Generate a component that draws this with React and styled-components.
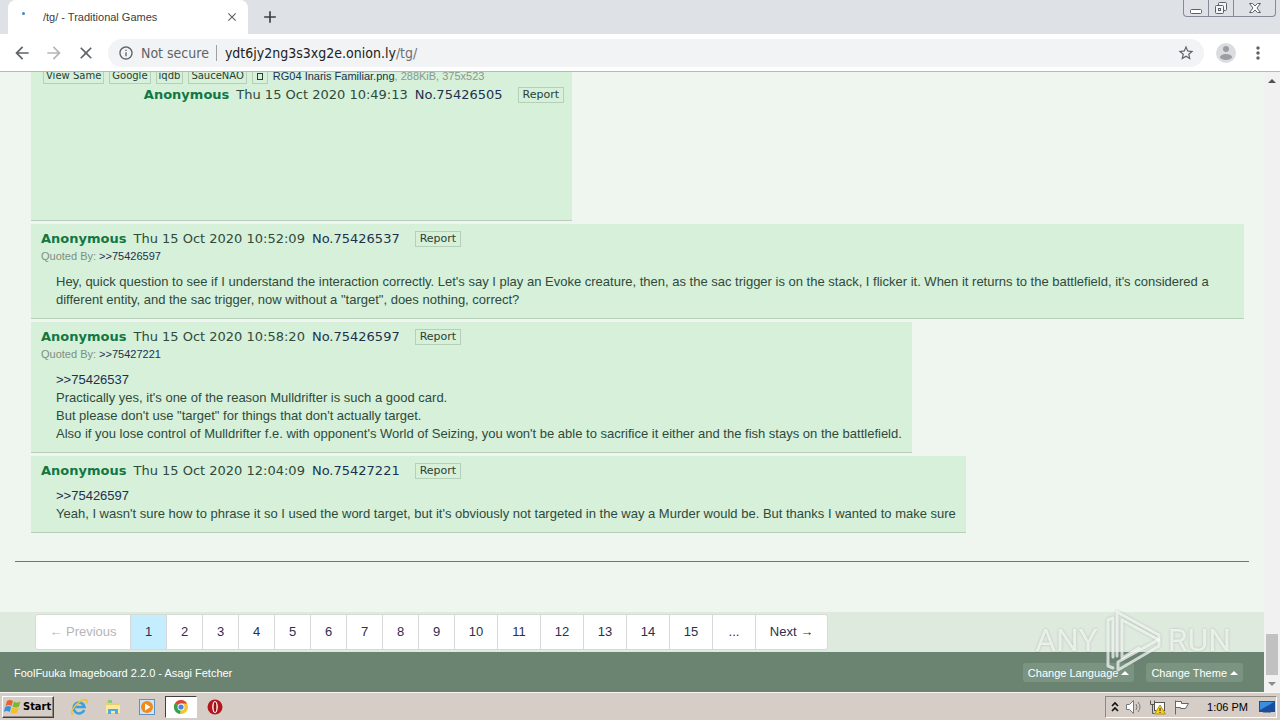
import React from 'react';
import styled, { createGlobalStyle, css } from 'styled-components';
import { MdArrowBack, MdArrowForward, MdClose, MdStarBorder, MdMoreVert, MdAdd, MdInfoOutline } from 'react-icons/md';

const GlobalStyle = createGlobalStyle`
  * {
    box-sizing: border-box;
  }
  body {
    margin: 0;
    font-family: 'Liberation Sans', Arial, sans-serif;
    font-size: 13px;
    line-height: 18px;
    color: #2f4a3a;
  }
  button {
    font: inherit;
    color: inherit;
    padding: 0;
    border: 0;
    background: none;
  }
  a {
    color: #22304f;
    text-decoration: none;
  }
  svg {
    display: block;
    flex: none;
  }
`;

const posts = [
  {
    id: '75426537',
    time: '10:52:09',
    quotedBy: '75426597',
    lines: [
      'Hey, quick question to see if I understand the interaction correctly. Let\'s say I play an Evoke creature, then, as the sac trigger is on the stack, I flicker it. When it returns to the battlefield, it\'s considered a different entity, and the sac trigger, now without a "target", does nothing, correct?',
    ],
  },
  {
    id: '75426597',
    time: '10:58:20',
    quotedBy: '75427221',
    replyTo: '75426537',
    lines: [
      "Practically yes, it's one of the reason Mulldrifter is such a good card.",
      'But please don\'t use "target" for things that don\'t actually target.',
      "Also if you lose control of Mulldrifter f.e. with opponent's World of Seizing, you won't be able to sacrifice it either and the fish stays on the battlefield.",
    ],
  },
  {
    id: '75427221',
    time: '12:04:09',
    replyTo: '75426597',
    lines: [
      "Yeah, I wasn't sure how to phrase it so I used the word target, but it's obviously not targeted in the way a Murder would be. But thanks I wanted to make sure",
    ],
  },
];

const pages = ['1', '2', '3', '4', '5', '6', '7', '8', '9', '10', '11', '12', '13', '14', '15', '...'];

const App = () => {
  return (
    <Screen>
      <GlobalStyle />
      <TabStrip />
      <Toolbar />
      <Viewport>
        <Board />
        <Scrollbar />
      </Viewport>
      <Taskbar />
      <Watermark />
    </Screen>
  );
};

const TabStrip = () => {
  return (
    <Strip>
      <Tab>
        <Spinner />
        <span>/tg/ - Traditional Games</span>
        <IconButton aria-label="Close tab" $size="16px">
          <MdClose size={14} />
        </IconButton>
      </Tab>
      <IconButton aria-label="New tab" $size="28px" $color="#3c4043">
        <MdAdd size={20} />
      </IconButton>
      <WindowControls>
        <WindowButton aria-label="Minimize" $width="24px">
          <svg width="14" height="14" viewBox="0 0 14 14" fill="#fff" stroke="#5b606c">
            <rect x="1.500" y="8.500" width="11" height="4" rx="1" />
          </svg>
        </WindowButton>
        <WindowButton aria-label="Restore" $width="25px">
          <svg width="14" height="14" viewBox="0 0 14 14" fill="#f4f5f7" stroke="#5b606c">
            <rect x="4.500" y="1.500" width="8" height="8" rx="1" />
            <rect x="1.500" y="4.500" width="8" height="8" rx="1" />
            <rect x="4.500" y="7.500" width="2" height="2" />
          </svg>
        </WindowButton>
        <WindowButton aria-label="Close" $width="42px">
          <svg width="14" height="14" viewBox="0 0 14 14" fill="#fff" stroke="#5b606c">
            <path d="M1.500 2.500h3L7 5l2.500-2.500h3L9 7l3.500 4.500h-3L7 9l-2.500 2.500h-3L5 7z" />
          </svg>
        </WindowButton>
      </WindowControls>
    </Strip>
  );
};

const Toolbar = () => {
  return (
    <Bar>
      <IconButton aria-label="Back" $size="32px">
        <MdArrowBack size={20} />
      </IconButton>
      <IconButton aria-label="Forward" $size="32px" $color="#b4b6b9">
        <MdArrowForward size={20} />
      </IconButton>
      <IconButton aria-label="Stop" $size="32px">
        <MdClose size={20} />
      </IconButton>
      <Omnibox>
        <MdInfoOutline size={16} />
        <Secure>Not secure</Secure>
        <Address>
          ydt6jy2ng3s3xg2e.onion.ly<span>/tg/</span>
        </Address>
        <IconButton aria-label="Bookmark" $size="20px">
          <MdStarBorder size={18} />
        </IconButton>
      </Omnibox>
      <IconButton aria-label="Profile" $size="32px">
        <svg width="20" height="20" viewBox="0 0 20 20">
          <circle cx="10" cy="10" r="10" fill="#dadce0" />
          <circle cx="10" cy="6" r="3" fill="#9a9da1" />
          <ellipse cx="10" cy="14" rx="6" ry="3" fill="#9a9da1" />
        </svg>
      </IconButton>
      <IconButton aria-label="Menu" $size="32px">
        <MdMoreVert size={20} />
      </IconButton>
    </Bar>
  );
};

const PostHead = ({ id, time }) => {
  return (
    <Head>
      <strong>Anonymous</strong>
      <time>Thu 15 Oct 2020 {time}</time>
      <a href={`#${id}`}>No.{id}</a>
      <Report>Report</Report>
    </Head>
  );
};

const Board = () => {
  return (
    <Page>
      <Thread>
        <ImagePost>
          <FileRow>
            <Tag>View Same</Tag>
            <Tag>Google</Tag>
            <Tag>iqdb</Tag>
            <Tag>SauceNAO</Tag>
            <Tag aria-label="Download">
              <svg width="10" height="12" viewBox="0 0 10 12" fill="none" stroke="currentColor">
                <rect x="2.500" y="3.500" width="5" height="6" />
              </svg>
            </Tag>
            <span>
              <a href="#file">RG04 Inaris Familiar.png</a>, 288KiB, 375x523
            </span>
          </FileRow>
          <PostHead id="75426505" time="10:49:13" />
        </ImagePost>
        {posts.map((post) => {
          return (
            <Post key={post.id}>
              <PostHead id={post.id} time={post.time} />
              {post.quotedBy && (
                <Quoted>
                  Quoted By: <a href={`#${post.quotedBy}`}>&gt;&gt;{post.quotedBy}</a>
                </Quoted>
              )}
              <Message>
                {post.replyTo && (
                  <p>
                    <a href={`#${post.replyTo}`}>&gt;&gt;{post.replyTo}</a>
                  </p>
                )}
                {post.lines.map((line) => (
                  <p key={line}>{line}</p>
                ))}
              </Message>
            </Post>
          );
        })}
      </Thread>
      <Rule />
      <Paginate aria-label="Pages">
        <ul>
          <PageItem $width="94px" $muted>
            <a href="#prev">← Previous</a>
          </PageItem>
          {pages.map((page) => (
            <PageItem key={page} $width={page.length > 1 ? '43px' : '36px'} $active={page === '1'}>
              <a href="#page">{page}</a>
            </PageItem>
          ))}
          <PageItem $width="72px">
            <a href="#next">Next →</a>
          </PageItem>
        </ul>
      </Paginate>
      <Footer>
        <span>FoolFuuka Imageboard 2.2.0 - Asagi Fetcher</span>
        <FooterButton>
          Change Language <Caret />
        </FooterButton>
        <FooterButton>
          Change Theme <Caret />
        </FooterButton>
      </Footer>
    </Page>
  );
};

const Scrollbar = () => {
  return (
    <Track>
      <Arrow aria-label="Scroll up">
        <svg width="8" height="4" viewBox="0 0 8 4" fill="#505050">
          <path d="M0 4L4 0l4 4z" />
        </svg>
      </Arrow>
      <Thumb />
      <Arrow aria-label="Scroll down">
        <svg width="8" height="4" viewBox="0 0 8 4" fill="#8a8a8a">
          <path d="M0 0l4 4 4-4z" />
        </svg>
      </Arrow>
    </Track>
  );
};

const Taskbar = () => {
  return (
    <Task>
      <StartButton>
        <svg width="18" height="16" viewBox="0 0 18 16">
          <path d="M3 2q3-2 6 0L7.500 7q-3-2-6 0z" fill="#e8622c" />
          <path d="M10 2.500q3 2 6.500 0L15 7.500q-3 2-6.500 0z" fill="#7db832" />
          <path d="M1.200 8q3-2 6 0l-1.500 5q-3-2-6 0z" fill="#3d8fd8" />
          <path d="M8.200 8.500q3 2 6.500 0l-1.500 5q-3 2-6.500 0z" fill="#f5bd27" />
        </svg>
        Start
      </StartButton>
      <TaskButton aria-label="Internet Explorer">
        <svg width="18" height="18" viewBox="0 0 18 18" fill="none">
          <path d="M14.200 12A5.500 5.500 0 1 1 14.500 9H5" stroke="#3aa0de" strokeWidth="2.600" />
          <path d="M3 16.500C-1 15 5 6.500 10 3.500S18.500 1 16.500 5.500" stroke="#ecc233" strokeWidth="1.500" />
        </svg>
      </TaskButton>
      <TaskButton aria-label="Explorer">
        <svg width="18" height="18" viewBox="0 0 18 18">
          <path d="M2 3h5l1 2h7v10H2z" fill="#e9cf6f" />
          <path d="M4 2h4v3H4z" fill="#8fc97a" />
          <path d="M2 7h14v8H2z" fill="#f8e9a1" />
          <path d="M4 16v-5h10v5h-3v-3H7v3z" fill="#54a9dd" />
        </svg>
      </TaskButton>
      <TaskButton aria-label="Media Player">
        <svg width="18" height="18" viewBox="0 0 18 18">
          <rect x="1.500" y="1.500" width="15" height="15" fill="#cfe4f5" stroke="#5e93c4" />
          <circle cx="9" cy="9" r="6" fill="#f08a1d" />
          <path d="M7 5.500v7L12.500 9z" fill="#fff" />
        </svg>
      </TaskButton>
      <TaskButton aria-label="Chrome" $pressed>
        <svg width="16" height="16" viewBox="0 0 16 16">
          <circle cx="8" cy="8" r="7" fill="#f3c62f" />
          <path d="M8 8L1.900 4.500A7 7 0 0 1 14.100 4.500H8z" fill="#dc4437" />
          <path d="M8 8l-1 7A7 7 0 0 1 1.900 4.500z" fill="#2ea352" />
          <circle cx="8" cy="8" r="3.500" fill="#fff" />
          <circle cx="8" cy="8" r="2.600" fill="#4a80e8" />
        </svg>
      </TaskButton>
      <TaskButton aria-label="Opera">
        <svg width="16" height="16" viewBox="0 0 16 16">
          <circle cx="8" cy="8" r="7.500" fill="#b3161b" />
          <ellipse cx="8" cy="8" rx="2.800" ry="6" fill="#fff" />
          <ellipse cx="8" cy="8" rx="1.400" ry="5" fill="#9d1014" />
        </svg>
      </TaskButton>
      <Tray>
        <svg width="8" height="12" viewBox="0 0 8 12" fill="none" stroke="#111" strokeWidth="1.600">
          <path d="M1 5l3-3 3 3M1 10l3-3 3 3" />
        </svg>
        <svg width="18" height="16" viewBox="0 0 18 16" fill="#fff" stroke="#77787a">
          <path d="M1.500 5.500h3l4-4v13l-4-4h-3z" />
          <path d="M11 5q2 3 0 6M13 3q4 5 0 10" fill="none" />
        </svg>
        <svg width="18" height="16" viewBox="0 0 18 16" fill="#fff" stroke="#555">
          <rect x="5.500" y="3.500" width="10" height="8" />
          <path d="M1.500 1.500v4h4v-4M3.500 5.500v9h5" fill="none" />
          <path d="M11 6l5.500 9h-11z" fill="#f5cf1d" stroke="#b8960c" />
          <path d="M11 9v3M11 13v1" stroke="#222" />
        </svg>
        <svg width="18" height="16" viewBox="0 0 18 16" fill="#fff" stroke="#666">
          <path d="M2.500 15.500v-14M2.500 2.500h6v2h7l-3 5h-5v-1h-5z" />
        </svg>
        <Clock>1:06 PM</Clock>
        <svg width="16" height="14" viewBox="0 0 16 14">
          <rect y="1" width="16" height="11" fill="#174f9c" />
          <path d="M1 2h14L1 10z" fill="#3b8de0" />
          <path d="M4 12h8v1H4z" fill="#7d8da0" />
        </svg>
      </Tray>
    </Task>
  );
};

const Watermark = () => {
  return (
    <Mark aria-hidden="true">
      <span>ANY</span>
      <svg width="58" height="64" viewBox="0 0 58 64" fill="none" stroke="currentColor" strokeWidth="3" strokeLinejoin="round" strokeLinecap="round">
        <path d="M9 49V10L4 12v46l5 2" />
        <path d="M13 48V4l42 23v5L18 12v38l17-10" />
        <path d="M14 54l40-22M14 54v8l41-24v-6" />
      </svg>
      <span>RUN</span>
    </Mark>
  );
};

const Screen = styled.div`
  position: relative;
  height: 100vh;
  display: flex;
  flex-direction: column;
  overflow: hidden;
`;

const Strip = styled.header`
  display: flex;
  align-items: center;
  height: 34px;
  flex: none;
  padding-left: 8px;
  background: #dee1e6;
`;

const Tab = styled.div`
  display: flex;
  align-items: center;
  width: 240px;
  height: 34px;
  padding: 0 8px 0 12px;
  margin-right: 8px;
  border-radius: 8px 8px 0 0;
  background: #fff;
  color: #3c4043;
  font-size: 11px;
  span {
    flex: 1;
  }
`;

const Spinner = styled.i`
  width: 3px;
  height: 3px;
  margin: 0 18px 8px 2px;
  border-radius: 50%;
  background: #4285d4;
`;

const IconButton = styled.button`
  display: grid;
  place-items: center;
  flex: none;
  width: ${({ $size }) => $size};
  height: ${({ $size }) => $size};
  color: ${({ $color }) => $color || '#5f6368'};
`;

const WindowControls = styled.div`
  display: flex;
  align-self: flex-start;
  margin-left: auto;
  margin-right: 4px;
  border: 1px solid #858a96;
  border-top: 0;
  border-radius: 0 0 4px 4px;
`;

const WindowButton = styled.button`
  display: grid;
  place-items: center;
  width: ${({ $width }) => $width};
  height: 16px;
  & + & {
    border-left: 1px solid #858a96;
  }
`;

const Bar = styled.nav`
  display: flex;
  align-items: center;
  flex: none;
  height: 38px;
  padding: 0 6px;
  border-bottom: 1px solid #b5bab5;
  background: #fff;
`;

const Omnibox = styled.div`
  display: flex;
  align-items: center;
  flex: 1;
  height: 28px;
  margin: 0 6px;
  padding: 0 8px 0 10px;
  border-radius: 14px;
  background: #f1f3f4;
  color: #5f6368;
  font-family: 'DejaVu Sans Condensed', 'Liberation Sans', Tahoma, sans-serif;
  font-size: 14px;
`;

const Secure = styled.span`
  margin-left: 7px;
  padding-right: 7px;
  border-right: 1px solid #9aa0a6;
  line-height: 16px;
`;

const Address = styled.div`
  flex: 1;
  margin-left: 8px;
  color: #202124;
  span {
    color: #6d7175;
  }
`;

const Viewport = styled.div`
  display: flex;
  flex: 1;
  min-height: 0;
`;

/* the page is scrolled to its end, so it hangs from the bottom edge */
const Page = styled.main`
  display: flex;
  flex-direction: column;
  justify-content: flex-end;
  flex: 1;
  min-width: 0;
  overflow: hidden;
  background: #eef6ef;
`;

const Thread = styled.section`
  display: flex;
  flex-direction: column;
  align-items: flex-start;
  gap: 3px;
  padding: 0 20px 0 31px;
`;

const Post = styled.article`
  padding: 5px 10px 9px;
  border-bottom: 1px solid #b9cfbc;
  background: #d6f0da;
`;

const ImagePost = styled(Post)`
  width: 541px;
  height: 158px;
  flex: none;
  display: flex;
  flex-direction: column;
  align-items: flex-end;
  padding: 4px 8px;
`;

const Head = styled.header`
  display: flex;
  align-items: center;
  gap: 7px;
  height: 18px;
  padding-top: 1px;
  font-family: 'DejaVu Sans', Verdana, sans-serif;
  font-size: 13px;
  strong {
    color: #117743;
  }
`;

const Tag = styled.button`
  height: 16px;
  padding: 0 2px;
  border: 1px solid #b5cfb9;
  font-family: 'DejaVu Sans', Verdana, sans-serif;
  font-size: 10px;
  line-height: 14px;
  color: #2a3f33;
`;

const Report = styled(Tag)`
  margin-left: 8px;
  padding: 0 4px;
  font-size: 11px;
`;

const FileRow = styled.div`
  display: flex;
  align-items: center;
  align-self: flex-start;
  gap: 5px;
  height: 18px;
  margin-left: 4px;
  font-size: 11px;
  color: #8a9a8c;
`;

const Quoted = styled.div`
  font-size: 11px;
  color: #7d8f80;
`;

const Message = styled.div`
  padding: 8px 0 0 15px;
  p {
    margin: 0;
  }
`;

const Rule = styled.hr`
  width: auto;
  height: 1px;
  margin: 28px 15px 50px;
  border: 0;
  background: #6b7a6e;
  align-self: stretch;
  flex: none;
`;

const Paginate = styled.nav`
  display: flex;
  flex: none;
  height: 40px;
  padding: 2px 35px;
  background: #deeadd;
  ul {
    display: flex;
    margin: 0;
    padding: 0;
    list-style: none;
    border: 1px solid #d4ddd4;
    border-radius: 3px;
    background: #fff;
  }
`;

const PageItem = styled.li`
  flex: none;
  width: ${({ $width }) => $width};
  text-align: center;
  a {
    display: block;
    line-height: 34px;
    color: #2b2f4f;
    ${({ $muted }) => $muted && css`
      color: #b5b5b9;
    `}
    ${({ $active }) => $active && css`
      background: #c4edff;
    `}
  }
  & + & {
    border-left: 1px solid #d4d8d8;
  }
`;

const Footer = styled.footer`
  display: flex;
  align-items: center;
  gap: 12px;
  flex: none;
  height: 40px;
  padding: 1px 21px 0 14px;
  background: #6b8472;
  color: #fff;
  font-size: 11px;
  span {
    flex: 1;
  }
`;

const FooterButton = styled.button`
  display: flex;
  align-items: center;
  gap: 3px;
  height: 19px;
  padding: 0 5px;
  border-radius: 3px;
  background: #7b9482;
`;

const Caret = styled.i`
  border: 4px solid transparent;
  border-top: 0;
  border-bottom-color: #fff;
`;

const Track = styled.aside`
  display: flex;
  flex-direction: column;
  flex: none;
  width: 16px;
  background: #f1f1f1;
`;

const Arrow = styled.button`
  display: grid;
  place-items: center;
  height: 17px;
`;

const Thumb = styled.div`
  height: 41px;
  margin: auto 2px 0;
  background: #c1c1c1;
`;

const Task = styled.footer`
  display: flex;
  align-items: center;
  flex: none;
  height: 28px;
  padding: 1px 0 0 2px;
  border-top: 1px solid #f8f6f3;
  background: #d5cdc6;
  color: #000;
`;

const StartButton = styled.button`
  display: flex;
  align-items: center;
  gap: 1px;
  width: 52px;
  height: 22px;
  margin-right: 9px;
  padding-left: 1px;
  border: 1px solid;
  border-color: #fff #404040 #404040 #fff;
  box-shadow: inset -1px -1px #8d8882;
  font-family: 'DejaVu Sans Condensed', 'Liberation Sans', Tahoma, sans-serif;
  font-size: 11px;
  font-weight: bold;
`;

const TaskButton = styled.button`
  display: grid;
  place-items: center;
  width: 32px;
  height: 22px;
  margin-right: 2px;
  border: 1px solid transparent;
  ${({ $pressed }) => $pressed && css`
    border-color: #404040 #fff #fff #404040;
    background: #fff;
  `}
`;

const Tray = styled.div`
  display: flex;
  align-items: center;
  gap: 6px;
  height: 22px;
  margin: 0 3px 0 auto;
  padding: 0 1px 0 5px;
  border: 1px solid;
  border-color: #8d8882 #fff #fff #8d8882;
`;

const Clock = styled.time`
  padding: 0 5px 0 10px;
  font-size: 11px;
`;

const Mark = styled.div`
  position: absolute;
  right: 49px;
  bottom: 48px;
  display: flex;
  align-items: center;
  gap: 6px;
  color: rgba(255, 255, 255, 0.7);
  font-family: Roboto, sans-serif;
  font-size: 32px;
  line-height: 64px;
  pointer-events: none;
  filter: drop-shadow(0 0 1px rgba(90, 110, 95, 0.5));
`;

export default App;
